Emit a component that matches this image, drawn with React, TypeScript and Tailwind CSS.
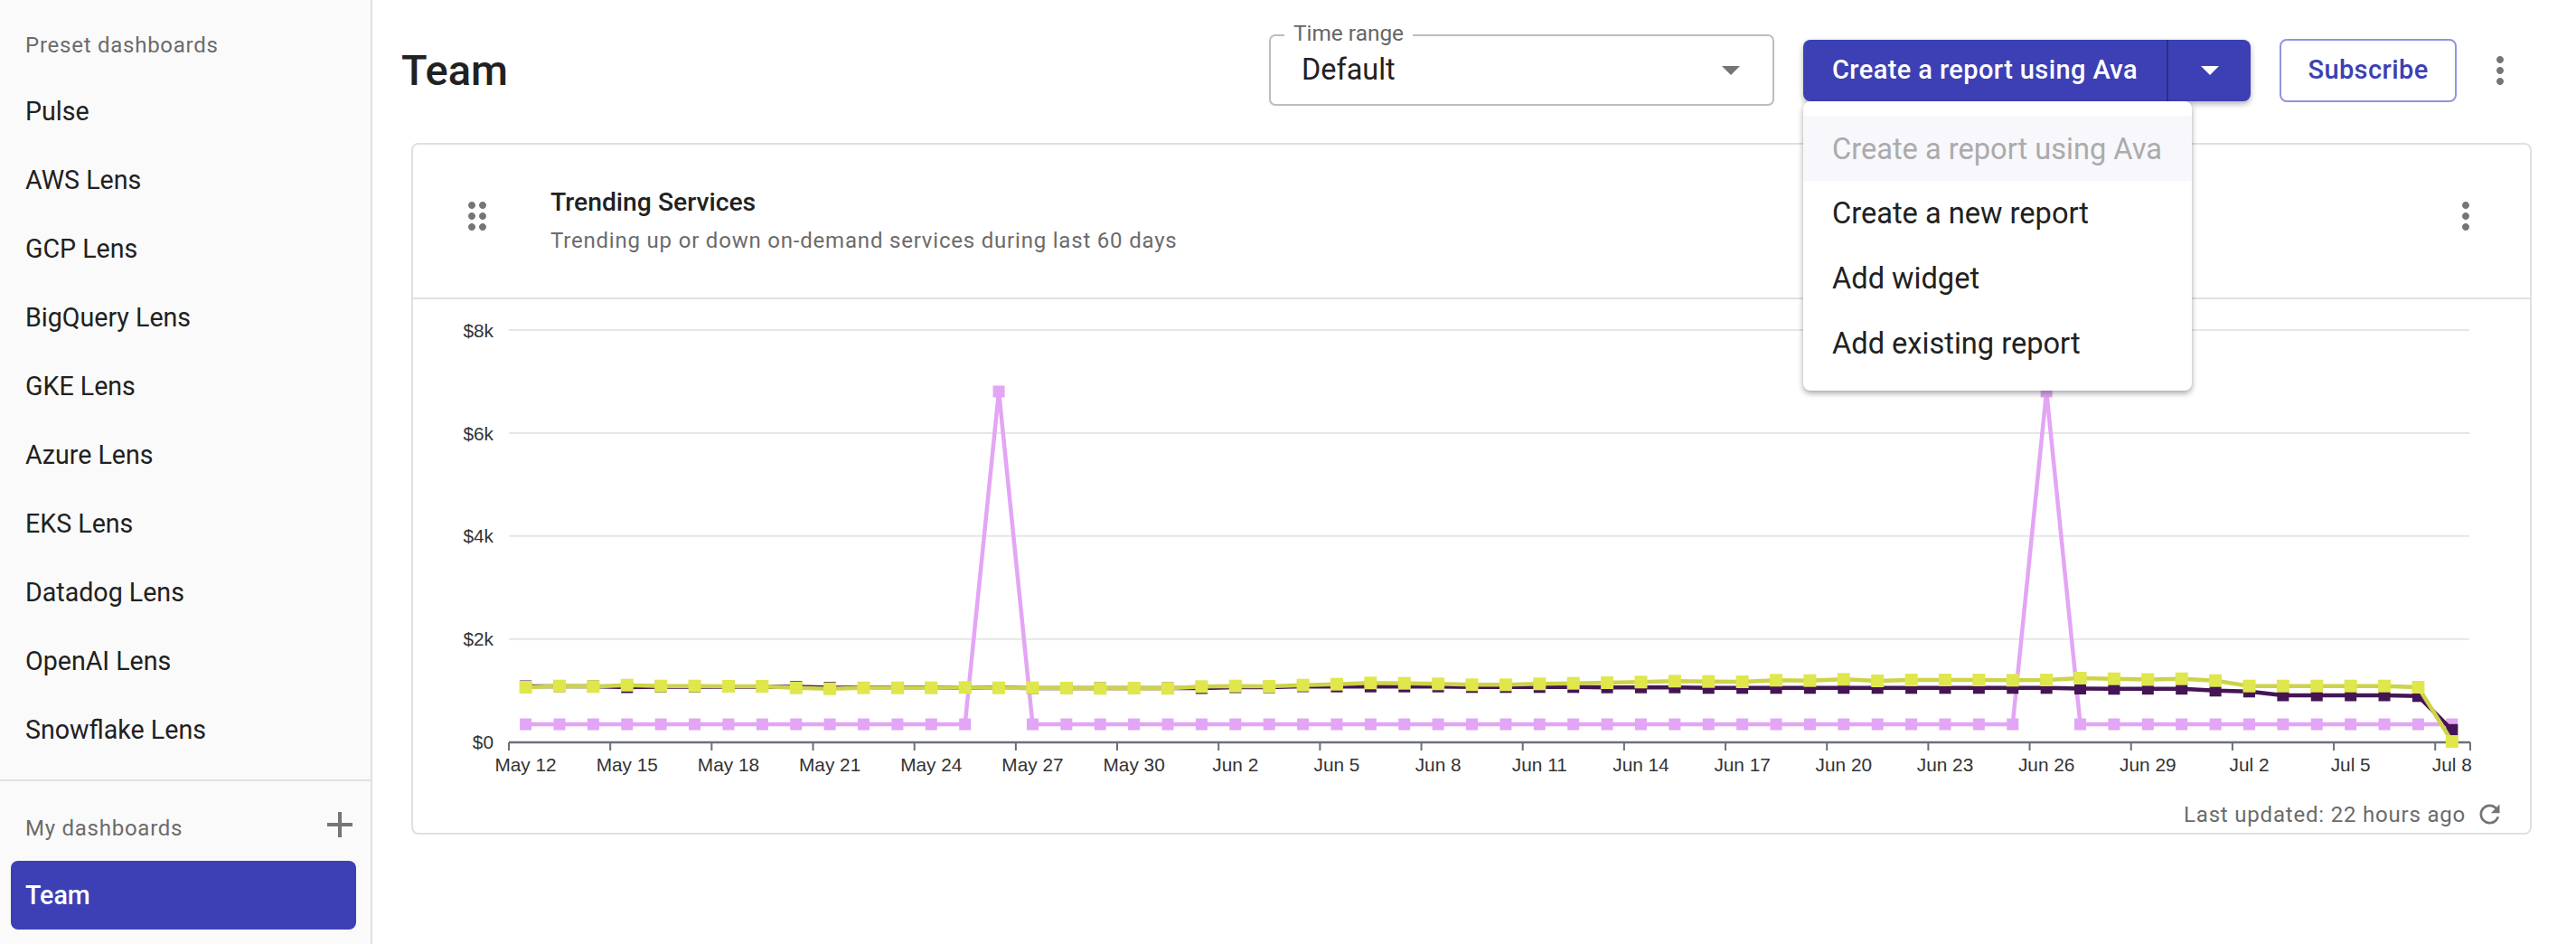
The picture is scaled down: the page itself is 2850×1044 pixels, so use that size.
import React from "react";

const presets = [
  "Pulse",
  "AWS Lens",
  "GCP Lens",
  "BigQuery Lens",
  "GKE Lens",
  "Azure Lens",
  "EKS Lens",
  "Datadog Lens",
  "OpenAI Lens",
  "Snowflake Lens",
];

const menuItems = ["Create a new report", "Add widget", "Add existing report"];

const tickLabels = [
  "May 12", "May 15", "May 18", "May 21", "May 24", "May 27", "May 30",
  "Jun 2", "Jun 5", "Jun 8", "Jun 11", "Jun 14", "Jun 17", "Jun 20",
  "Jun 23", "Jun 26", "Jun 29", "Jul 2", "Jul 5", "Jul 8",
];

const yLabels = [
  { label: "$8k", y: 365 },
  { label: "$6k", y: 479 },
  { label: "$4k", y: 592.8 },
  { label: "$2k", y: 706.8 },
  { label: "$0", y: 820.8 },
];

// pixel heights read off the chart, one per day
const yellow = [
  760, 758.7, 759.3, 757.7, 758.7, 758.7, 759, 759, 760.7, 761.7, 760.7, 760.7, 760.7, 760.3, 760.7,
  760.7, 761, 761.3, 761, 761.3, 759.3, 758.7, 759, 757.7, 756.7, 755.3, 755.7, 756.3, 757.3, 757.3,
  756.3, 755.7, 755, 754.3, 753.3, 753.7, 754, 752.3, 752.7, 751.3, 753, 752, 752, 752, 752.3,
  752, 750, 750.7, 751.5, 750.7, 752.7, 758.7, 758.7, 758.7, 758.7, 758.7, 760, 820,
];

const purple = [
  759, 759, 759, 760, 759.5, 759.5, 759.5, 759.5, 759.5, 760.5, 760.5, 760.5, 760.5, 760.5, 760.5,
  761, 761, 761, 761, 761, 761, 760, 760, 759, 759.2, 759.2, 759.2, 759.2, 759.8, 759.8,
  759.8, 759.8, 760.2, 760.2, 760.2, 760.8, 760.8, 760.8, 760.8, 760.8, 760.8, 760.8, 760.8, 760.8, 760.8,
  760.8, 761.5, 761.8, 761.7, 761.7, 763.8, 764.8, 769, 769, 769, 769, 769.8, 807.3,
];

const pink = yellow.map((_, i) => (i === 14 || i === 45 ? 433 : 801));

const xAt = (i: number) => 581.6 + 37.39 * i;
const toPoints = (values: number[]) => values.map((y, i) => `${xAt(i)},${y}`).join(" ");

const Series = ({ values, line, marker, width, size }: { values: number[]; line: string; marker: string; width: number; size: number }) => (
  <g>
    <polyline points={toPoints(values)} fill="none" stroke={line} strokeWidth={width} strokeLinejoin="round" />
    {values.map((y, i) => (
      <rect key={i} x={xAt(i) - size / 2} y={y - size / 2} width={size} height={size} fill={marker} />
    ))}
  </g>
);

const MoreIcon = () => (
  <svg viewBox="0 0 24 24" className="w-[48px] h-[48px] fill-[#757575]">
    <path d="M12 8c1.1 0 2-.9 2-2s-.9-2-2-2-2 .9-2 2 .9 2 2 2zm0 2c-1.1 0-2 .9-2 2s.9 2 2 2 2-.9 2-2-.9-2-2-2zm0 6c-1.1 0-2 .9-2 2s.9 2 2 2 2-.9 2-2-.9-2-2-2z" />
  </svg>
);

const Chart = () => (
  <svg viewBox="457 331 2342 549" className="block w-[2342px] h-[549px]">
    {yLabels.slice(0, 4).map((row) => (
      <line key={row.y} x1={563} x2={2732} y1={row.y} y2={row.y} stroke="#e6e6e6" strokeWidth={2} />
    ))}
    <line x1={563} x2={2733} y1={821} y2={821} stroke="#6b6f7a" strokeWidth={2.5} />
    {tickLabels.map((_, k) => (
      <line key={k} x1={563 + 112.17 * k} x2={563 + 112.17 * k} y1={821} y2={830} stroke="#6b6f7a" strokeWidth={2} />
    ))}
    <line x1={2733} x2={2733} y1={821} y2={830} stroke="#6b6f7a" strokeWidth={2} />
    <g className="font-['Liberation_Sans',sans-serif] text-[20.8px] fill-[#333333]">
      {yLabels.map((row) => (
        <text key={row.label} x={546} y={row.y + 7.5} textAnchor="end">
          {row.label}
        </text>
      ))}
      {tickLabels.map((label, k) => (
        <text key={label} x={xAt(k * 3)} y={853} textAnchor="middle">
          {label}
        </text>
      ))}
    </g>
    <Series values={pink} line="#e3a5f5" marker="#e3a5f5" width={4.5} size={13} />
    <Series values={purple} line="#451455" marker="#451455" width={4.5} size={13} />
    <Series values={yellow} line="#ccd349" marker="#dfe74c" width={4.5} size={14} />
  </svg>
);

const Sidebar = () => (
  <aside className="w-[412px] h-[1044px] shrink-0 bg-[#fafafa] border-r-2 border-[#e0e0e0] flex flex-col">
    <div className="h-[85px] pt-[33px] pl-[28px] text-[24px] leading-[34px] tracking-[0.75px] text-[#6b6b6b]">
      Preset dashboards
    </div>
    {presets.map((name) => (
      <div key={name} className="h-[76px] shrink-0 flex items-center pl-[28px] text-[28.6px] text-[#212121]">
        {name}
      </div>
    ))}
    <div className="mt-[17px] border-t-2 border-[#e0e0e0]" />
    <div className="mt-[30px] h-[44px] flex items-center justify-between pl-[28px] pr-[10px] text-[24px] tracking-[0.75px] text-[#6b6b6b]">
      <span>My dashboards</span>
      <svg viewBox="0 0 24 24" className="w-[48px] h-[48px] mb-[8px] fill-[#757575]">
        <path d="M19 13h-6v6h-2v-6H5v-2h6V5h2v6h6v2z" />
      </svg>
    </div>
    <div className="mt-[14px] ml-[12px] mr-[16px] h-[76px] rounded-[8px] bg-[#3c40b4] flex items-center pl-[16px] text-[28.6px] font-medium text-white">
      Team
    </div>
  </aside>
);

const Header = () => (
  <div className="h-[158px] flex items-center pl-[32px] pr-[60px] pb-[2px]">
    <h1 className="flex-1 text-[47px] font-medium text-[#212121]">Team</h1>

    <div className="relative w-[559px] h-[79px] mb-[1px] border-2 border-[#bdbdbd] rounded-[7px] flex items-center justify-between pl-[34px] pr-[36px]">
      <span className="absolute left-[15px] top-[-18px] px-[10px] bg-white text-[24.4px] leading-[30px] text-[#666666]">Time range</span>
      <span className="text-[32.4px] text-[#212121]">Default</span>
      <svg viewBox="0 0 20 10" className="w-[20px] h-[10px] fill-[#757575]">
        <path d="M0 0l10 10L20 0z" />
      </svg>
    </div>

    <div className="relative z-10 ml-[32px] w-[495px] h-[68px] rounded-[8px] bg-[#3c40b4] shadow-[0_3px_6px_rgba(0,0,0,0.3)] flex items-stretch">
      <div className="w-[402px] flex items-center pl-[32px] text-[29px] font-medium tracking-[0.4px] text-white">
        Create a report using Ava
      </div>
      <div className="flex-1 border-l-2 border-[#2c2f87] flex items-center justify-center">
        <svg viewBox="0 0 20 10" className="w-[20px] h-[10px] fill-white">
          <path d="M0 0l10 10L20 0z" />
        </svg>
      </div>
      <div className="absolute left-0 top-full w-[430px] py-[16px] bg-white rounded-[8px] shadow-[0_3px_6px_rgba(0,0,0,0.35)]">
        <div className="h-[72px] pt-[2px] flex items-center pl-[32px] bg-[#f7f7fc] text-[32.6px] text-[#ababab]">Create a report using Ava</div>
        {menuItems.map((item) => (
          <div key={item} className="h-[72px] flex items-center pl-[32px] text-[32.6px] text-[#212121]">
            {item}
          </div>
        ))}
      </div>
    </div>

    <div className="ml-[32px] w-[196px] h-[70px] rounded-[8px] border-2 border-[#9095dc] flex items-center justify-center text-[29px] font-medium tracking-[0.4px] text-[#3c40b4]">
      Subscribe
    </div>

    <div className="ml-[24px]">
      <MoreIcon />
    </div>
  </div>
);

const Card = () => (
  <div className="ml-[43px] mr-[49px] h-[765px] border-2 border-[#e0e0e0] rounded-[8px] flex flex-col">
    <div className="h-[171px] shrink-0 border-b-2 border-[#e0e0e0] flex items-center pl-[47px] pr-[47px] pb-[12px]">
      <svg viewBox="0 0 24 24" className="w-[48px] h-[48px] fill-[#757575]">
        <path d="M11 18c0 1.1-.9 2-2 2s-2-.9-2-2 .9-2 2-2 2 .9 2 2zm-2-8c-1.1 0-2 .9-2 2s.9 2 2 2 2-.9 2-2-.9-2-2-2zm0-6c-1.1 0-2 .9-2 2s.9 2 2 2 2-.9 2-2-.9-2-2-2zm6 4c1.1 0 2-.9 2-2s-.9-2-2-2-2 .9-2 2 .9 2 2 2zm0 2c-1.1 0-2 .9-2 2s.9 2 2 2 2-.9 2-2-.9-2-2-2zm0 6c-1.1 0-2 .9-2 2s.9 2 2 2 2-.9 2-2-.9-2-2-2z" />
      </svg>
      <div className="ml-[57px] flex-1 pt-[12px]">
        <div className="text-[28.3px] leading-[40px] font-medium text-[#212121]">Trending Services</div>
        <div className="mt-[2px] text-[24px] leading-[40px] tracking-[0.8px] text-[#6b6b6b]">
          Trending up or down on-demand services during last 60 days
        </div>
      </div>
      <MoreIcon />
    </div>
    <Chart />
    <div className="flex-1 flex items-center justify-end gap-[10px] pr-[28px] text-[24px] tracking-[0.8px] text-[#6b6b6b]">
      <span>Last updated: 22 hours ago</span>
      <svg viewBox="0 0 24 24" className="w-[33px] h-[33px] fill-[#757575]">
        <path d="M17.65 6.35C16.2 4.9 14.21 4 12 4c-4.42 0-7.99 3.58-7.99 8s3.57 8 7.99 8c3.73 0 6.84-2.55 7.73-6h-2.08c-.82 2.33-3.04 4-5.65 4-3.31 0-6-2.69-6-6s2.69-6 6-6c1.66 0 3.14.69 4.22 1.78L13 11h7V4l-2.35 2.35z" />
      </svg>
    </div>
  </div>
);

export default function App() {
  return (
    <div className="w-[2850px] h-[1044px] flex bg-white overflow-hidden font-['Roboto',sans-serif]">
      <Sidebar />
      <main className="flex-1 min-w-0">
        <Header />
        <Card />
      </main>
    </div>
  );
}
